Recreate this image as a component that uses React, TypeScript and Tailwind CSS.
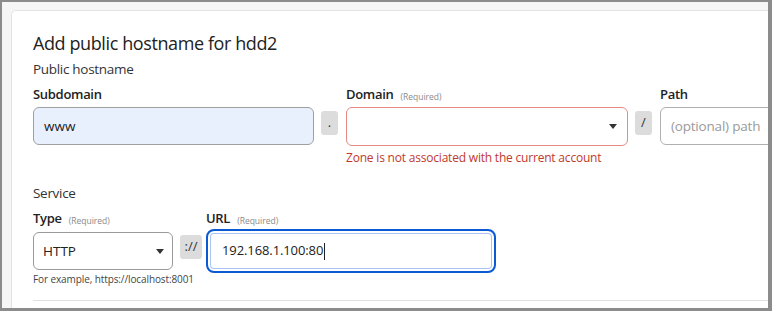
import { ReactNode } from "react";

const font = { fontFamily: '"Open Sans", "Noto Sans", sans-serif' };

function Label({ text, required }: { text: string; required?: boolean }) {
  return (
    <div className="flex h-[22px] items-end gap-[7px] text-[13px] font-semibold leading-none tracking-[-0.3px] text-[#222]">
      <span>{text}</span>
      {required && (
        <span className="text-[8.5px] font-normal tracking-normal text-[#8a8a8a]">(Required)</span>
      )}
    </div>
  );
}

function Sep({ children, w = "w-[17px]" }: { children: ReactNode; w?: string }) {
  return (
    <div className="flex shrink-0 flex-col">
      <div className="h-[22px]" />
      <div className="mt-[10px]">
        <div
          className={`flex h-[24px] ${w} items-center justify-center rounded-[3px] bg-[#dcdcdc] text-[13px] text-[#333]`}
        >
          {children}
        </div>
      </div>
    </div>
  );
}

function Caret() {
  return (
    <svg width="8" height="5" viewBox="0 0 8 5" className="fill-[#333]">
      <path d="M0 0h8L4 5z" />
    </svg>
  );
}

export default function App() {
  return (
    <div
      style={font}
      className="h-[311px] w-[772px] overflow-hidden border-t-2 border-r-4 border-b-[3px] border-l-2 border-[#8c8c8c] bg-[#f6f6f6] pt-[8px] pl-[9px]"
    >
      <div className="h-[330px] w-[820px] rounded-[5px] border border-[#e3e3e3] bg-white pt-[19px] pl-[21px]">
        <h2 className="text-[18px] leading-[26px] tracking-[-0.4px] text-[#222]">
          Add public hostname for hdd2
        </h2>
        <p className="mt-[3px] text-[13.5px] leading-[20px] tracking-[-0.3px] text-[#333]">Public hostname</p>

        <div className="flex">
          <div className="flex w-[281px] shrink-0 flex-col">
            <Label text="Subdomain" />
            <div className="mt-[6px] flex h-[38px] items-center rounded-[6px] border border-[#a0a0a0] bg-[#e8f0fe] pl-[10px] text-[13.5px] text-[#222]">
              www
            </div>
          </div>
          <div className="ml-[7px]">
            <Sep>.</Sep>
          </div>
          <div className="ml-[8px] flex w-[282px] shrink-0 flex-col">
            <Label text="Domain" required />
            <div className="mt-[6px] flex h-[39px] items-center justify-end rounded-[6px] border border-[#e58a84] bg-white pr-[10px]">
              <Caret />
            </div>
            <p className="mt-[4px] whitespace-nowrap text-[12px] leading-[16px] tracking-[-0.2px] text-[#c0392b]">
              Zone is not associated with the current account
            </p>
          </div>
          <div className="ml-[7px]">
            <Sep>/</Sep>
          </div>
          <div className="ml-[8px] flex w-[200px] shrink-0 flex-col">
            <Label text="Path" />
            <div className="mt-[6px] flex h-[38px] items-center rounded-[6px] border border-[#b0b0b0] bg-white pl-[10px] text-[13.5px] tracking-[-0.2px] text-[#9a9a9a]">
              (optional) path
            </div>
          </div>
        </div>

        <p className="mt-[17px] text-[13.5px] leading-[20px] tracking-[-0.3px] text-[#333]">Service</p>

        <div className="flex">
          <div className="flex w-[140px] shrink-0 flex-col">
            <Label text="Type" required />
            <div className="mt-[7px] flex h-[38px] items-center justify-between rounded-[6px] border border-[#9a9a9a] bg-white pr-[8px] pl-[9px] text-[13.5px] text-[#222]">
              <span>HTTP</span>
              <Caret />
            </div>
            <p className="mt-[2px] whitespace-nowrap text-[10px] leading-[14px] tracking-[-0.1px] text-[#444]">
              For example, https://localhost:8001
            </p>
          </div>
          <div className="ml-[7px]">
            <Sep w="w-[22px]">://</Sep>
          </div>
          <div className="ml-[4px] flex w-[290px] shrink-0 flex-col">
            <Label text="URL" required />
            <div className="mt-[4px] flex h-[44px] items-center rounded-[8px] border-2 border-[#0a5ad4] bg-white pl-[14px] text-[13px] tracking-[-0.1px] text-[#222] shadow-[inset_0_0_0_2px_#fff,inset_0_0_0_3px_#a9c4f5]">
              <span>192.168.1.100:80</span>
              <span className="ml-[1px] h-[17px] w-px bg-[#222]" />
            </div>
          </div>
        </div>

        <div className="mt-[14px] h-px w-[760px] bg-[#e0e0e0]" />
      </div>
    </div>
  );
}
